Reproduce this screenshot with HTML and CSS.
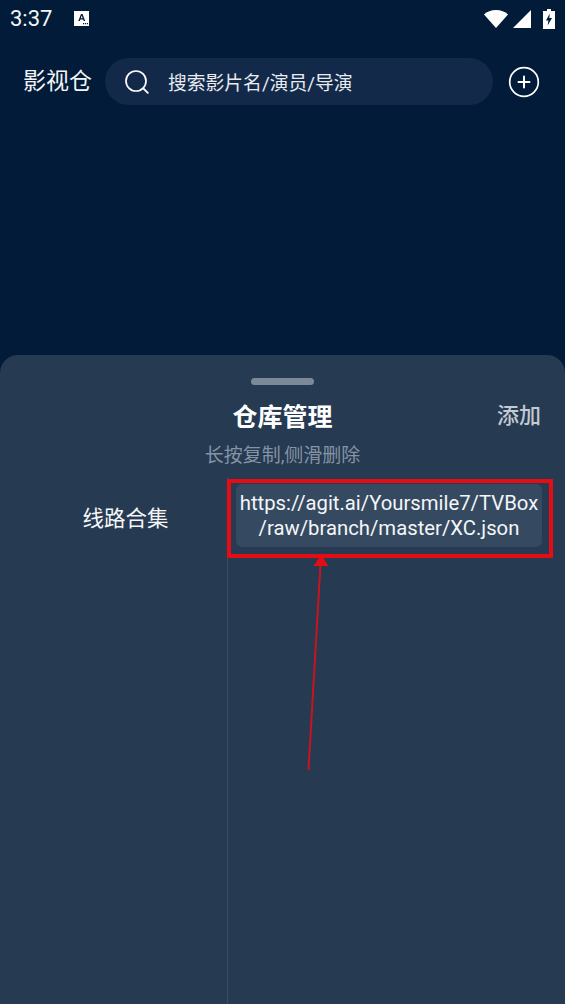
FILE: index.html
```html
<!DOCTYPE html>
<html lang="zh">
<head>
<meta charset="utf-8">
<title>影视仓</title>
<link rel="stylesheet" href="styles.css">
</head>
<body>
<div class="app">
  <div class="status">
    <div class="status-left">
      <span class="time">3:37</span>
      <svg class="notif" viewBox="0 0 15 15" width="15" height="15"><path fill="#fff" d="M0 0h15v15H0z"/><path fill="#00193a" d="M7 3h1.500l2.700 7H9.700l-.5-1.500H6.300L5.800 10H4.300zM6.800 7.200h1.900l-.95-2.700z"/><path fill="#00193a" d="M9 12h1.200v1.200H9zM11 12h1.200v1.200H11zM13 12h1v1.200h-1z"/></svg>
    </div>
    <div class="status-right">
      <svg width="24" height="19" viewBox="0 0 24 19"><path fill="#fff" d="M0 5.500C3 2.500 7 1 12 1s9 1.500 12 4.500L12 19z"/></svg>
      <svg width="18" height="18" viewBox="0 0 18 18"><path fill="#fff" d="M18 0v18H0z"/></svg>
      <svg width="12" height="20" viewBox="0 0 12 20"><path fill="#fff" d="M4 0h4v2h4v18H0V2h4z"/><path fill="#00193a" d="M6.800 4.500 3 11.500h2.400L4.600 16.500 9 9H6.300z"/></svg>
    </div>
  </div>
  <header class="top">
    <span class="brand">影视仓</span>
    <div class="search">
      <svg class="search-icon" width="26" height="26" viewBox="0 0 26 26"><circle cx="11" cy="12" r="10" fill="none" stroke="#fff" stroke-width="1.700"/><path d="m18.300 19.300 4.500 4.500" stroke="#fff" stroke-width="1.900" stroke-linecap="round"/></svg>
      <span class="search-text">搜索影片名/演员/导演</span>
    </div>
    <svg class="add" width="32" height="32" viewBox="0 0 32 32"><circle cx="16" cy="16" r="14.300" fill="none" stroke="#fff" stroke-width="1.700"/><path d="M16 10.500v11M10.500 16h11" stroke="#fff" stroke-width="2" stroke-linecap="round"/></svg>
  </header>
  <section class="sheet">
    <div class="handle"></div>
    <div class="title-row">
      <h1 class="title">仓库管理</h1>
      <span class="action">添加</span>
    </div>
    <p class="hint">长按复制,侧滑删除</p>
    <div class="columns">
      <div class="groups"><div class="group">线路合集</div></div>
      <div class="list">
        <div class="highlight">
          <div class="card">https://agit.ai/Yoursmile7/TVBox<br>/raw/branch/master/XC.json</div>
        </div>
      </div>
    </div>
  </section>
  <svg class="arrow" width="565" height="1004" viewBox="0 0 565 1004">
    <path d="M308.500 770 320.500 564" stroke="#c8141f" stroke-width="2" fill="none"/>
    <path d="M321 555 328.500 566H313.500z" fill="#e60c14"/>
  </svg>
</div>
</body>
</html>
```
FILE: styles.css
```css
* { box-sizing: border-box; }
html, body { margin: 0; padding: 0; height: 100%; }
body { background: #00193a; font-family: Roboto, "Noto Sans CJK SC", sans-serif; color: #fff; }
.app { position: relative; width: 565px; height: 1004px; overflow: hidden; display: flex; flex-direction: column; background: #011b39; }
.status { height: 38px; flex: none; display: flex; justify-content: space-between; align-items: center; padding: 0 10px 0 10px; }
.status-left { display: flex; align-items: center; gap: 22px; }
.time { font-size: 22px; line-height: 40px; color: #f4f6f8; }
.notif { margin-top: -1px; }
.status-right { display: flex; align-items: center; gap: 5px; margin-top: -1px; }
.status-right svg:last-child { margin-left: 7px; }
.top { flex: none; height: 47px; margin-top: 20px; display: flex; align-items: center; padding: 0 25px 0 23px; }
.brand { width: 82px; flex: none; font-size: 23px; color: #f2f4f6; line-height: 47px; white-space: nowrap; }
.search { width: 388px; height: 47px; flex: none; border-radius: 24px; background: #13294a; display: flex; align-items: center; padding-left: 20px; }
.search-icon { flex: none; }
.search-text { margin-left: 17px; font-size: 18.800px; color: #e8ebef; }
.add { margin-left: 15px; flex: none; }
.sheet { margin-top: 250px; flex: 1; background: #263a52; border-radius: 18px 18px 0 0; display: flex; flex-direction: column; }
.handle { width: 63px; height: 7px; border-radius: 4px; background: #7b8999; margin: 23px auto 0; flex: none; }
.title-row { position: relative; height: 44px; margin-top: 11px; display: flex; justify-content: center; align-items: center; flex: none; }
.title { margin: 0; font-size: 25px; font-weight: 700; line-height: 44px; color: #fff; }
.action { position: absolute; right: 24px; top: 4px; font-size: 22px; line-height: 32px; font-weight: 500; color: #c4cad2; }
.hint { margin: 3px 0 0; flex: none; text-align: center; font-size: 19px; line-height: 26px; color: #8593a3; }
.columns { flex: 1; display: flex; margin-top: 8px; }
.groups { width: 228px; flex: none; border-right: 1px solid #3b4d63; }
.group { text-align: center; font-size: 21.500px; line-height: 30px; padding: 27px 0 0; margin-left: 24px; color: #f4f6f8; }
.list { flex: 1; padding-top: 2px; }
.highlight { width: 326px; height: 79px; margin-left: -1px; border: 4px solid #e60c14; padding: 1px 7px 0 5px; }
.card { height: 63px; background: #354a61; border-radius: 6px; text-align: center; font-size: 20.300px; line-height: 25px; padding-top: 7px; white-space: nowrap; color: #f4f6f8; }
.arrow { position: absolute; left: 0; top: 0; pointer-events: none; }
```
